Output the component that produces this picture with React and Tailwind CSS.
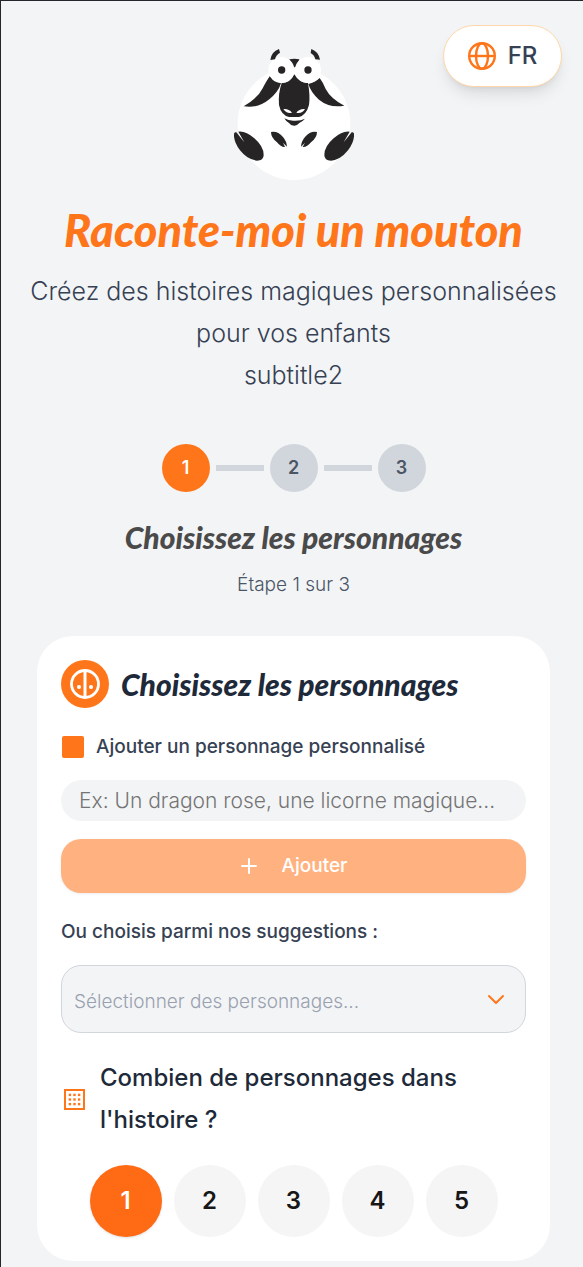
import { useState } from 'react';

const SUGGESTIONS = ['Un mouton', 'Un dragon', 'Une licorne', 'Un chevalier'];
const STEPS = [1, 2, 3];
const COUNTS = [1, 2, 3, 4, 5];

const SheepLogo = () => (
  <svg className="w-[120px] h-33" viewBox="42 24 360 396" role="img" aria-label="Mouton">
    <circle cx="222" cy="251" r="169" fill="#fff" />
    <g fill="#272425">
      <path d="M208 58q15-3 30 0-3 14-12 24h-5q-11-10-13-24z" />
      <path d="M150 108q12 14 33 22-8 26-35 48-34 28-77 21 44-26 57-54 12-24 22-37z" />
      <path d="M299 114q-14 14-34 18 8 26 32 47 32 26 76 18-40-20-56-50-8-20-18-33z" />
      <path d="M185 129q26 0 38-26 14 26 41 26 7 38 3 66-8 30-30 36h-30q-24-6-30-36-3-34 8-66z" />
      <path d="M193 235q14 8 30 7 18 1 32-6-8 9-17 13-8 9-16 8-10 0-15-8-8-3-14-14z" />
    </g>
    <path d="M190 207q16-2 26 11-16 4-26-11zM255 207q-16-2-26 11 17 4 26-11z" fill="#fff" />
    <circle cx="184" cy="90" r="39" fill="#fff" />
    <circle cx="264" cy="90" r="39" fill="#fff" />
    <g fill="#272425">
      <circle cx="185" cy="90" r="11" />
      <circle cx="264" cy="90" r="11" />
      <path d="M177 27l3 11q-12 6-15 20l-14 2q3-25 26-33z" />
      <path d="M274 27l-2 12q11 6 14 19l14 1q-4-24-26-32z" />
      <path d="M153 276q20-4 36 15 11 13 12 29l-12-12 6 13q-12 1-24-14-18-14-18-31z" />
      <path d="M291 276q-20-4-36 15-11 13-12 29l12-12-7 13q13 1 25-14 18-14 18-31z" />
      <path d="M42 281q1-6 7-4l24 30-18-32q22-3 48 20 28 24 28 50 0 17-20 17-28-2-51-31-20-27-18-50z" />
      <path d="M402 281q-1-6-7-4l-24 30 18-32q-22-3-48 20-28 24-28 50 0 17 20 17 28-2 51-31 20-27 18-50z" />
    </g>
  </svg>
);

const GlobeIcon = () => (
  <svg className="size-7" viewBox="0 0 28 28" fill="none" stroke="currentColor" strokeWidth="2.4" aria-hidden="true">
    <circle cx="14" cy="14" r="12.8" />
    <ellipse cx="14" cy="14" rx="6" ry="12.8" />
    <path d="M1 14h26" />
  </svg>
);

const CharacterIcon = () => (
  <svg className="size-[30px]" viewBox="0 0 30 30" fill="none" stroke="currentColor" strokeWidth="2.8" aria-hidden="true">
    <circle cx="15" cy="15" r="13.5" />
    <path d="M15 2v26" strokeWidth="3" />
    <circle cx="9" cy="18" r="2" fill="currentColor" stroke="none" />
    <circle cx="21" cy="18" r="2" fill="currentColor" stroke="none" />
  </svg>
);

const GridIcon = () => (
  <svg className="size-[21px]" viewBox="0 0 21 21" fill="currentColor" aria-hidden="true">
    <rect x="1" y="1" width="19" height="19" fill="none" stroke="currentColor" strokeWidth="2" />
    {[4.7, 9.3, 13.9].map((y) =>
      [4.7, 9.3, 13.9].map((x) => <rect key={`${x}-${y}`} x={x} y={y} width="2.4" height="2.4" />)
    )}
  </svg>
);

const App = () => {
  const [name, setName] = useState('');
  const [count, setCount] = useState(1);

  return (
    <div className="relative min-h-screen border-t border-l border-[#26252b] bg-gray-100 pt-[47px] pr-[33px] pb-1 pl-9 font-['Inter',sans-serif] text-gray-700">
      <button
        type="button"
        className="absolute top-6 right-[21px] flex h-[62px] w-[119px] items-center justify-center gap-3 rounded-full border border-orange-200 bg-white text-2xl font-medium shadow-lg"
      >
        <span className="text-[#ff751a]"><GlobeIcon /></span>
        FR
      </button>

      <header className="flex flex-col items-center text-center">
        <SheepLogo />
        <h1 className="mt-5 font-['Lato',sans-serif] text-[45px] leading-[60px] font-black whitespace-nowrap text-[#ff751a] italic">
          Raconte-moi un mouton
        </h1>
        <p className="-mx-8 mt-2.5 text-[25px] leading-[42px] font-light">
          Créez des histoires magiques personnalisées
          <br />
          pour vos enfants
          <br />
          subtitle2
        </p>
      </header>

      <section className="mt-12 flex flex-col items-center">
        <ol className="flex items-center gap-1.5">
          {STEPS.map((step) => (
            <li key={step} className="flex items-center gap-1.5">
              {step > 1 && <span className="h-1.5 w-12 bg-gray-300" />}
              <span
                className={`flex size-12 items-center justify-center rounded-full text-lg font-semibold ${
                  step === 1 ? 'bg-[#ff751a] text-white' : 'bg-gray-300 text-gray-600'
                }`}
              >
                {step}
              </span>
            </li>
          ))}
        </ol>
        <h2 className="mt-6 font-['Lato',sans-serif] text-3xl leading-[42px] font-black text-[#4a4a4a] italic">
          Choisissez les personnages
        </h2>
        <p className="mt-3 text-[19px] leading-[30px] font-light text-gray-600">Étape 1 sur 3</p>
      </section>

      <main className="mt-9 rounded-[36px] bg-white p-6">
        <div className="flex items-center gap-3">
          <span className="flex size-12 items-center justify-center rounded-full bg-[#ff751a] text-white">
            <CharacterIcon />
          </span>
          <h2 className="font-['Lato',sans-serif] text-3xl leading-[42px] font-black text-gray-800 italic">
            Choisissez les personnages
          </h2>
        </div>

        <label htmlFor="character" className="mt-6 flex items-center gap-3 text-[19px] leading-[30px] font-medium">
          <span className="ml-px size-[22px] rounded-xs bg-[#ff751a]" />
          Ajouter un personnage personnalisé
        </label>
        <input
          id="character"
          type="text"
          value={name}
          onChange={(e) => setName(e.target.value)}
          placeholder="Ex: Un dragon rose, une licorne magique..."
          className="mt-[18px] h-[41px] w-full rounded-full bg-gray-100 px-[18px] text-[21px] font-light placeholder:text-[#757575]"
        />
        <button
          type="button"
          disabled={!name.trim()}
          className="mt-[18px] flex h-[54px] w-full items-center justify-center gap-6 rounded-[20px] bg-[#ff751a] text-[19px] font-medium text-white shadow-sm disabled:opacity-55"
        >
          <svg className="size-[18px]" viewBox="0 0 18 18" stroke="currentColor" strokeWidth="2" strokeLinecap="round" aria-hidden="true">
            <path d="M2 9h14M9 2v14" />
          </svg>
          Ajouter
        </button>

        <label htmlFor="suggestions" className="mt-6 block text-[19px] leading-[30px] font-medium">
          Ou choisis parmi nos suggestions :
        </label>
        <div className="relative mt-[18px]">
          <select
            id="suggestions"
            defaultValue=""
            className="h-[68px] w-full appearance-none rounded-[20px] border border-gray-300 bg-gray-100 px-3 pt-1.5 text-[19px] font-light text-gray-400"
          >
            <option value="">Sélectionner des personnages...</option>
            {SUGGESTIONS.map((suggestion) => (
              <option key={suggestion}>{suggestion}</option>
            ))}
          </select>
          <svg className="pointer-events-none absolute top-7 right-[21px] h-3 w-[18px] text-[#ff751a]" viewBox="0 0 18 12" fill="none" stroke="currentColor" strokeWidth="2" strokeLinecap="round" strokeLinejoin="round" aria-hidden="true">
            <path d="M2 3l7 7 7-7" />
          </svg>
        </div>

        <div className="mt-6 flex items-center gap-[15px]">
          <span className="ml-[3px] shrink-0 text-[#ff751a]"><GridIcon /></span>
          <h3 className="max-w-96 text-2xl leading-[42px] font-medium text-gray-800">
            Combien de personnages dans l'histoire ?
          </h3>
        </div>

        <div className="mt-6 flex justify-center gap-3">
          {COUNTS.map((n) => (
            <button
              key={n}
              type="button"
              aria-pressed={count === n}
              onClick={() => setCount(n)}
              className={`size-[72px] rounded-full text-2xl font-semibold ${
                count === n ? 'bg-[#ff6a14] text-white shadow-sm' : 'bg-neutral-100 text-neutral-900'
              }`}
            >
              {n}
            </button>
          ))}
        </div>
      </main>
    </div>
  );
};

export default App;
